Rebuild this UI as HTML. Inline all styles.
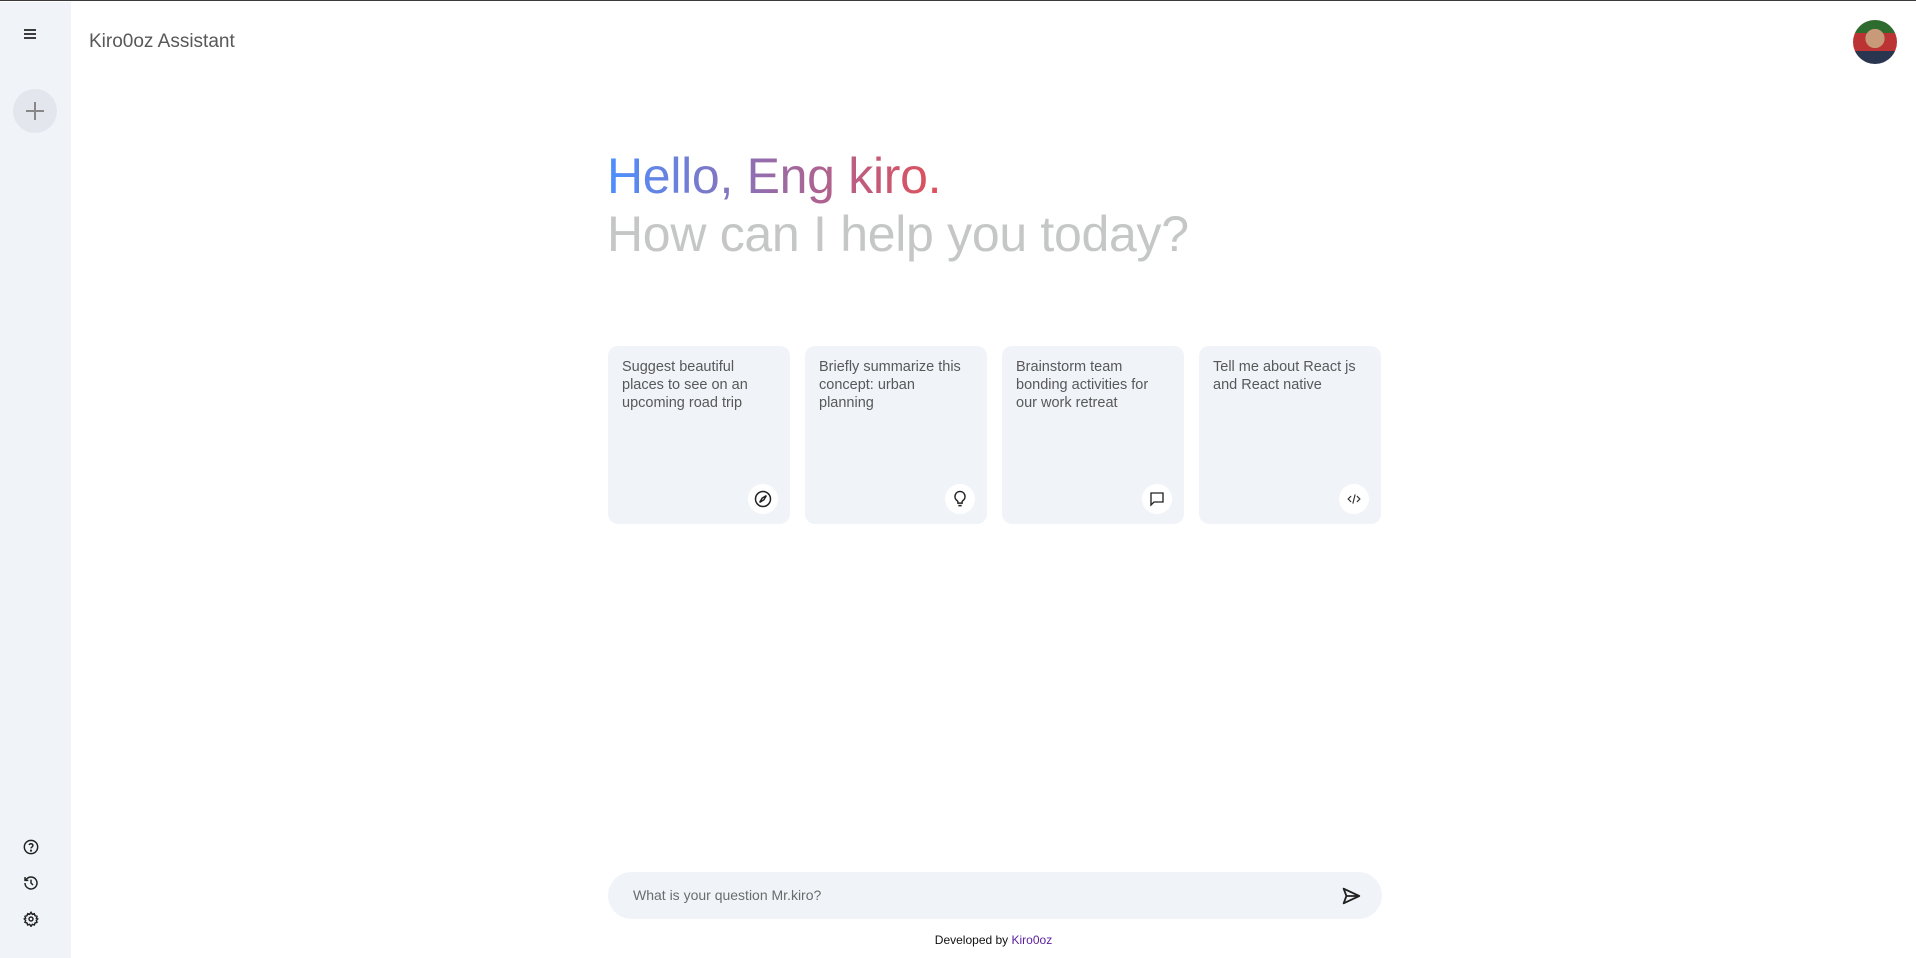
<!DOCTYPE html>
<html><head><meta charset="utf-8"><style>
*{box-sizing:border-box;margin:0;padding:0}
body{width:1916px;height:957px;overflow:hidden;font-family:"Liberation Sans",Arial,sans-serif;background:#fff;position:relative;border-top:1px solid #3a3a3a}
.side{position:absolute;left:0;top:1px;width:71px;height:956px;background:#f0f4f9}
.ic{position:absolute;left:20px}
.plus{position:absolute;left:13px;top:87px;width:44px;height:44px;border-radius:50%;background:#e3e7ed}
.title{position:absolute;left:89px;top:30px;font-size:19px;color:#585858}
.av{position:absolute;left:1853px;top:19px;width:44px;height:44px;border-radius:50%;overflow:hidden;background:radial-gradient(circle at 50% 42%,#c99a7a 0 28%,transparent 29%),linear-gradient(#2e6b2e 0 30%,#b33 30% 70%,#2a3550 70%)}
.hello{position:absolute;left:607px;top:146px;font-size:50px;line-height:58px;letter-spacing:-0.3px}
.g{display:inline-block;background:linear-gradient(90deg,#4b90ff,#9a6aa6 50%,#e0505a);-webkit-background-clip:text;background-clip:text;color:transparent}
.sub{color:#c4c7c5}
.cards{position:absolute;left:608px;top:345px;display:flex;gap:15px}
.card{width:182px;height:178px;background:#f0f4f9;border-radius:10px;padding:12px 14px;font-size:14.5px;line-height:18px;color:#585858;position:relative}
.ci{position:absolute;right:12px;bottom:10px;width:30px;height:30px;border-radius:50%;background:#fff;display:flex;align-items:center;justify-content:center}
.inp{position:absolute;left:608px;top:871px;width:774px;height:47px;border-radius:24px;background:#f0f4f9}
.ph{position:absolute;left:25px;top:15px;font-size:14px;color:#6b6b6b}
.foot{position:absolute;left:0;width:100%;text-align:center;top:932px;padding-left:71px;font-size:12px;color:#111}
.foot span{color:#5a1f9c}
</style></head><body>
<div class="side">
<svg class="ic" style="top:24px;left:22px" width="16" height="16" viewBox="0 0 24 24"><path d="M3 6h18M3 12h18M3 18h18" stroke="#222" stroke-width="2.5"/></svg>
<div class="plus"><svg width="44" height="44" viewBox="0 0 44 44"><path d="M22 13v18M13 22h18" stroke="#888" stroke-width="2"/></svg></div>
<svg class="ic" style="top:837px;left:23px" width="16" height="16" viewBox="0 0 24 24" fill="none" stroke="#222" stroke-width="2.2"><circle cx="12" cy="12" r="10"/><path d="M9.1 9a3 3 0 0 1 5.8 1c0 2-3 2.5-3 4"/><circle cx="12" cy="17.5" r=".6" fill="#222"/></svg>
<svg class="ic" style="top:873px;left:23px" width="16" height="16" viewBox="0 0 24 24" fill="none" stroke="#222" stroke-width="2.2"><path d="M3 12a9 9 0 1 0 3-6.7L3 8"/><path d="M3 3v5h5"/><path d="M12 7v5l3 3"/></svg>
<svg class="ic" style="top:909px;left:23px" width="16" height="16" viewBox="0 0 24 24" fill="none" stroke="#222" stroke-width="2.2"><circle cx="12" cy="12" r="3"/><path d="M12 2l2 3 3-1 1 3 3 1-1 3 2 1-2 2 1 3-3 1-1 3-3-1-2 3-2-3-3 1-1-3-3-1 1-3-2-2 2-1-1-3 3-1 1-3 3 1z"/></svg>
</div>
<div class="title">Kiro0oz Assistant</div>
<div class="av"></div>
<div class="hello"><div class="g">Hello, Eng kiro.</div><div class="sub">How can I help you today?</div></div>
<div class="cards">
<div class="card">Suggest beautiful places to see on an upcoming road trip<div class="ci"><svg width="20" height="20" viewBox="0 0 24 24" fill="none" stroke="#222" stroke-width="1.8"><circle cx="12" cy="12" r="9"/><path d="M16 8l-5 3-3 5 5-3z"/></svg></div></div>
<div class="card">Briefly summarize this concept: urban planning<div class="ci"><svg width="20" height="20" viewBox="0 0 24 24" fill="none" stroke="#222" stroke-width="1.8"><path d="M12 3a6 6 0 0 0-3.5 10.9c.6.5 1 1.2 1 2V17h5v-1.1c0-.8.4-1.5 1-2A6 6 0 0 0 12 3zM10 20h4"/></svg></div></div>
<div class="card">Brainstorm team bonding activities for our work retreat<div class="ci"><svg width="18" height="18" viewBox="0 0 24 24" fill="none" stroke="#222" stroke-width="1.8"><path d="M4 4h16v12H8l-4 4z"/></svg></div></div>
<div class="card">Tell me about React js and React native<div class="ci"><svg width="14" height="14" viewBox="0 0 24 24" fill="none" stroke="#333" stroke-width="2"><path d="M7 7l-5 5 5 5M17 7l5 5-5 5M14 4l-4 16"/></svg></div></div>
</div>
<div class="inp"><div class="ph">What is your question Mr.kiro?</div>
<svg style="position:absolute;right:20px;top:13px" width="22" height="22" viewBox="0 0 24 24" fill="none" stroke="#222" stroke-width="2" stroke-linejoin="round"><path d="M4 4l17 8-17 8 3-8zM7 12h14"/></svg></div>
<div class="foot">Developed by <span>Kiro0oz</span></div>
</body></html>
